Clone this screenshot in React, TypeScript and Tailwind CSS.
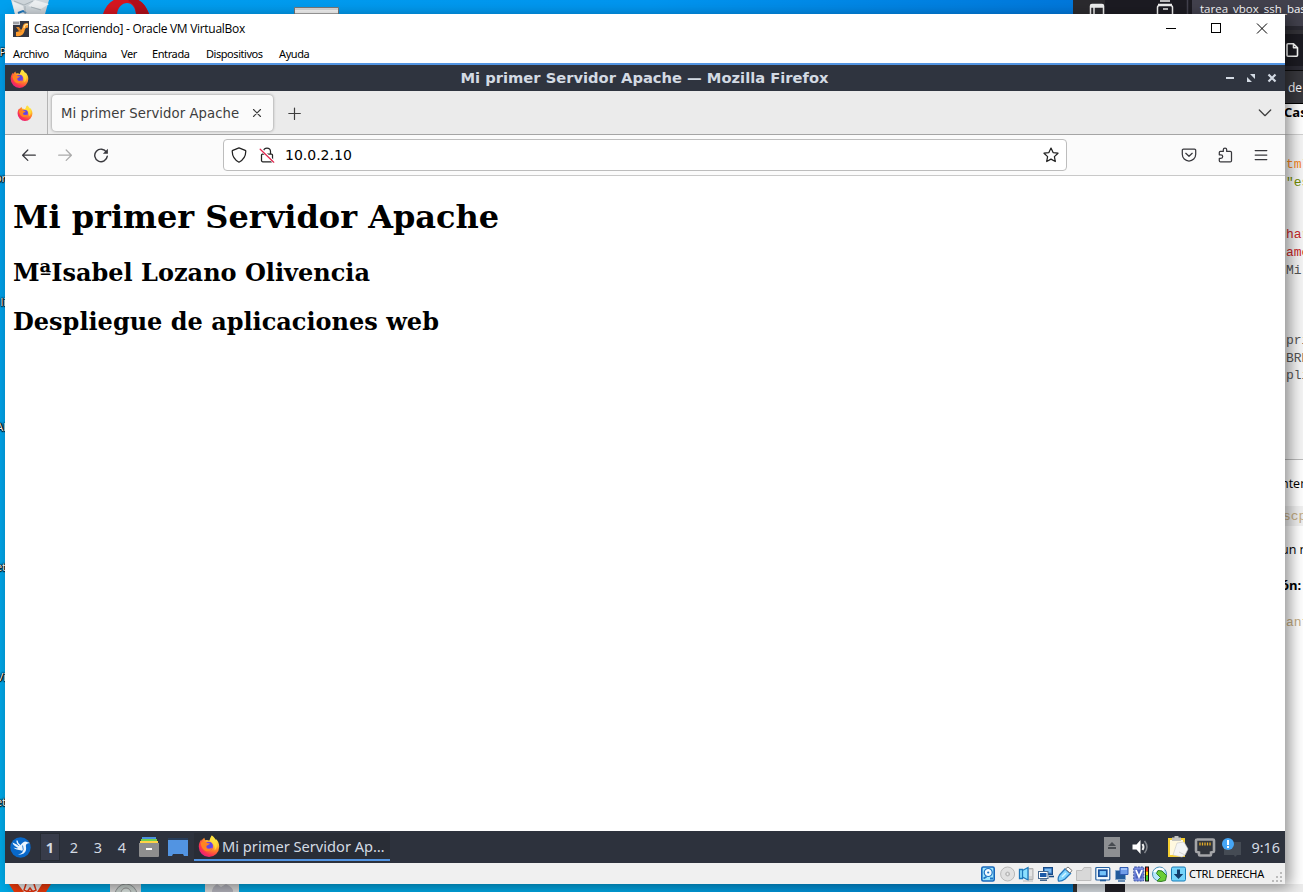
import type { ReactNode } from "react";

const UI = "font-['Open_Sans','Noto_Sans',sans-serif]";
const DEJAVU = "font-['DejaVu_Sans',sans-serif]";

function Icon({ size = 16, className = "", children, box }: { size?: number; className?: string; children: ReactNode; box?: string }) {
  return (
    <svg
      width={size}
      height={size}
      viewBox={box ?? "0 0 16 16"}
      fill="none"
      stroke="currentColor"
      strokeWidth="1.25"
      strokeLinecap="round"
      strokeLinejoin="round"
      className={`block shrink-0 ${className}`}
    >
      {children}
    </svg>
  );
}

function Firefox({ size, id, className = "" }: { size: number; id: string; className?: string }) {
  return (
    <svg width={size} height={size} viewBox="0 0 20 20" className={`block shrink-0 ${className}`}>
      <defs>
        <radialGradient id={id} cx="0.8" cy="0.12" r="0.98">
          <stop offset="0" stopColor="#fff44f" />
          <stop offset="0.38" stopColor="#ffc02a" />
          <stop offset="0.62" stopColor="#ff7a2c" />
          <stop offset="0.85" stopColor="#fb3450" />
          <stop offset="1" stopColor="#e9207c" />
        </radialGradient>
      </defs>
      <path
        d="M12.6.5c2 1.4 2.9 3 3.2 4.2.3-.3.3-.7.2-1.200 2 1.600 3.300 4.200 3.300 7.100a9.300 9.300 0 0 1-18.600 0C.7 7.900 1.600 5.600 3 4c0 .6.100 1 .3 1.300C3.900 4 5 3.100 5.900 2.600c-.1.900.3 1.700.8 2.100 1.500-.3 2.700 0 3.700.6C10.900 3.800 11.600 1.600 12.600.5Z"
        fill={`url(#${id})`}
      />
      <path d="M10.400 5.300C11 3.500 11.800 1.700 12.600.5c3 2 3.600 4.500 4.300 6.500.8 2.500.2 5.500-1.900 7 .8-4-.6-6.900-4.600-8.700Z" fill="#ffe03c" opacity="0.75" />
      <circle cx="9.800" cy="10.100" r="4" fill="#8a3fe0" />
      <circle cx="10.300" cy="9.300" r="2.600" fill="#5b4be0" />
      <path d="M2.400 7.100c2.100-1.300 4-1.100 5.400 0 .9.500 2.100.4 3 .6-.4 1.200-1.900 1.300-2.700 1.900-1 .7-.6 2.600 1 2.900 1.800.3 2.600-.6 4-.4-1 2.600-4.400 3.600-7.100 2C3.800 12.700 2.700 9.800 2.400 7.100Z" fill="#ff8420" />
    </svg>
  );
}

function Desktop() {
  return (
    <div className="absolute inset-0 overflow-hidden bg-gradient-to-b from-[#019be8] to-[#00a9e6]">
      <div className="absolute inset-x-0 top-0 h-[14px] bg-gradient-to-r from-[#00a0ee] via-[#0095ef] to-[#0067d0]" />
      <div className="absolute bottom-0 left-[600px] h-[8px] w-[474px] bg-gradient-to-r from-[#00a9e6] to-[#0080d4]" />
      <svg className="absolute left-0 top-0" width="350" height="14" viewBox="0 0 350 14">
        <path d="M11 0h38l-4 14H15Z" fill="#cfd6db" />
        <path d="m12 1 11 5 2 8H15ZM35 0l-7 6 13 3 8-5Z" fill="#edf0f2" />
        <path d="m18 13 5-2 3 2" stroke="#2179bf" strokeWidth="2" fill="none" />
        <path d="m14 1 10 4 9-4M25 6v8m6-7 10 3" stroke="#aab4ba" fill="none" />
        <path d="M103 14C106 4 114 -3 126-3s20 7 23 17h-13c-1-7-4-11-9-11s-9 4-10 11Z" fill="#d51620" />
        <path d="M132-2c9 1 14 8 17 16h-13c0-7-3-11-8-13Z" fill="#b30f1b" />
        <path d="M294.500 7.500h44V14h-44z" fill="#d7d7d7" stroke="#777" />
        <path d="M295 11.500h43" stroke="#f6f6f6" strokeWidth="3" />
      </svg>
      <svg className="absolute bottom-0 left-0" width="250" height="8" viewBox="0 0 250 8">
        <path d="M9 0h42l-5 8H14Z" fill="#ef3b0c" />
        <path d="M18 0h24l-5 8H24Z" fill="#eee" />
        <path d="m26 0-2 6 3 1.500h6l3-1.500-2-6M27 8l3-4 3 4" stroke="#e73510" strokeWidth="1.500" fill="none" />
        <path d="M110 0h31v8h-31zM205 0h34v8h-34z" fill="#d9d9d9" />
        <circle cx="126" cy="11" r="11" fill="#c9d3cf" stroke="#8e9494" />
        <circle cx="126" cy="9" r="5" fill="#dce5e1" stroke="#999" />
        <path d="M212 8q0-5 5-8l4 3 5-3q8 4 7 8Z" fill="#b3b3bc" />
      </svg>
      {[
        ["P", "top-[45px]"],
        ["or", "top-[171px]"],
        ["li", "top-[295px]"],
        ["Al", "top-[420px]"],
        ["et", "top-[560px]"],
        ["Vi", "top-[670px]"],
        ["et", "top-[795px]"],
      ].map(([t, pos]) => (
        <span key={pos} className={`absolute left-0 w-[6px] h-[14px] overflow-hidden flex justify-end text-[11px] leading-[14px] text-white [text-shadow:0_1px_1px_#000,1px_0_1px_#000,0_0_2px_#000,0_0_2px_#000] ${UI} ${pos}`}>
          {t}
        </span>
      ))}
    </div>
  );
}

function BackgroundBrowser() {
  return (
    <div className={`absolute left-[1073px] top-0 h-[892px] w-[230px] overflow-hidden bg-[#f5f5f5] ${UI}`}>
      <div className="flex h-[26px] bg-[#1c1b22] text-[#fbfbfe]">
        <div className="w-[32px] bg-[#2b2a2e]" />
        <div className="flex-1" />
        <div className="w-[111px] overflow-hidden whitespace-nowrap bg-[#42414d] pl-[8px] pt-[1px] text-[11.500px] leading-[16px]">tarea_vbox_ssh_bastionado</div>
      </div>
      <div className="h-[4px] bg-[#2b2a33]" />
      <div className="h-[4px] bg-[#333238]" />
      <div className="flex h-[32px] justify-end bg-[#1c1b22] pr-[3px] pt-[8px] text-white">
        <Icon size={16}><path d="M4 1.800h5.500l4 4v7.400a1 1 0 0 1-1 1H4a1 1 0 0 1-1-1V2.800a1 1 0 0 1 1-1Zm5.500 0v4h4" strokeWidth="1.600" /></Icon>
      </div>
      <div className="h-[4px] bg-[#2b2a33]" />
      <div className="h-[33px] border-t border-[#0c0c0d] bg-[#38383d] pl-[215px] pt-[9px] text-[12px] leading-[16px] text-[#fbfbfe]">de</div>
      <div className="h-[32px] border-t border-black border-b border-b-[#d0d0d0] bg-white pl-[211px] text-[13px] font-bold leading-[16px] text-black">Cas</div>
      <div className="h-[325px] border-b border-[#bbb] whitespace-pre pl-[213px] pt-[21px] font-['Liberation_Mono',monospace] text-[13px] leading-[17.600px] text-[#555]">
        <div className="text-[#f5871f]">tml</div>
        <div className="text-[#718c00]">"es</div>
        <div>{" "}</div>
        <div>{" "}</div>
        <div className="text-[#c82829]">har</div>
        <div className="text-[#c82829]">ame</div>
        <div>Mi</div>
        <div>{" "}</div>
        <div>{" "}</div>
        <div>{" "}</div>
        <div>pri</div>
        <div>BRE</div>
        <div>pli</div>
      </div>
      <div className="h-[432px] whitespace-nowrap bg-white pl-[208px] pt-[16px] text-[12.500px] leading-[16px] text-black">
        <div>nter</div>
        <div className="mt-[14px] h-[20px] bg-[#f1f1f1] pl-[2px] pt-[3px] font-['Liberation_Mono',monospace] text-[13px] text-[#c4ad84]">scp</div>
        <div className="mt-[16px]">un n</div>
        <div className="mt-[19px] text-[13px] font-bold">ón:</div>
        <div className="mt-[22px] pl-[5px] font-['Liberation_Mono',monospace] text-[13px] text-[#c4ad84]">ant</div>
      </div>
      <svg className="absolute left-0 top-0" width="120" height="14" viewBox="0 0 120 14" fill="none" stroke="#eee" strokeWidth="1.500">
        <path d="M17.500 14V6q0-1.500 1.500-1.500h10q1.500 0 1.500 1.500v8M17.500 7h13M21 7v7" />
        <path d="M18 5.800h12" strokeWidth="2.500" />
        <path d="M87 1h10M85 4.500h14M84.500 14V7.500q0-2 2-2h11q2 0 2 2V14M90 9h5" />
        <path d="M114.500 0v14" stroke="#42414d" />
      </svg>
      <div className="absolute bottom-0 left-0 flex h-[8px] w-[52px]">
        <div className="w-[4px] bg-[#333]" />
        <div className="w-[28px] bg-[#d7dde2]" />
        <div className="w-[20px] bg-[#232229]" />
      </div>
      <div className="absolute bottom-0 left-[52px] h-[8px] w-[178px] bg-[#ececec]" />
    </div>
  );
}

function WindowHeader() {
  return (
    <header className="h-[49px] bg-white text-black">
      <div className="flex h-[29px] items-center pl-[8px]">
        <svg width="16" height="16" viewBox="0 0 16 16" className="block">
          <path d="M0 0h16v16H0z" fill="#343641" />
          <path d="M0 0h7v4H0z" fill="#d0d3da" />
          <path d="M1 1v2m2-2v2m2-2v2" stroke="#555" strokeWidth=".8" />
          <path d="M15 2.500c-4-1-5 1-5.500 4C9 9 6.500 10.500 3 11v4c5 1 7.500-1.500 8.500-5 .6-3 1.500-3 3.500-3.500Z" fill="#ff9c2d" />
          <path d="M15 3.500c-3-.5-3.500 1-4 3.500" stroke="#ffe8a0" strokeWidth="1.200" fill="none" />
          <path d="M3 6h3l3 4.500-2 1Z" fill="#e0872a" />
        </svg>
        <span className={`ml-[5px] text-[12px] tracking-[-0.290px] ${UI}`}>Casa [Corriendo] - Oracle VM VirtualBox</span>
        <svg className="ml-auto mr-[17px] block" width="103" height="12" viewBox="0 0 103 12" fill="none" stroke="#000" shapeRendering="crispEdges">
          <path d="M1 5.500h10M46.500.5h9v9h-9z" />
          <path d="m92 .5 10 10m0-10-10 10" shapeRendering="auto" />
        </svg>
      </div>
      <nav className="flex h-[20px] gap-[16px] pl-[8px] pt-[2px] text-[11px] leading-[18px] tracking-[-0.400px] font-['Noto_Sans',sans-serif]">
        <span className="w-[35px]">Archivo</span>
        <span className="w-[41px]">Máquina</span>
        <span className="w-[15px]">Ver</span>
        <span className="w-[38px]">Entrada</span>
        <span className="w-[57px] tracking-[-0.450px]">Dispositivos</span>
        <span>Ayuda</span>
      </nav>
    </header>
  );
}

function BrowserChrome() {
  return (
    <div className={DEJAVU}>
      <div className="flex h-[28px] items-center border-t-2 border-[#5294e2] bg-[#2f343f] pl-[5px] pr-[8px] text-[#d3dae3]">
        <Firefox size={19} id="fx-title" />
        <div className="flex-1 pl-[35px] text-center text-[14.700px] font-bold leading-[24px]">Mi primer Servidor Apache — Mozilla Firefox</div>
        <svg width="52" height="12" viewBox="0 0 52 12" fill="#d3dae3">
          <path d="M1 5h8v2H1zM25 2h5v5zM22 5v5h5z" />
          <path d="m43.500 2.500 7 7m0-7-7 7" stroke="#d3dae3" strokeWidth="2.200" />
        </svg>
      </div>
      <div className="flex h-[44px] border-b border-[#a5a5a5] bg-[#ebebeb] text-[#3d3d3d]">
        <div className="flex w-[43px] items-center justify-center border-r border-[#b4b4b4] pr-[3px]">
          <Firefox size={16} id="fx-tab" />
        </div>
        <div className="ml-[4px] mt-[4px] flex h-[36px] w-[221px] items-center rounded-[4px] bg-[#fbfbfb] pl-[9px] shadow-[0_0_3px_rgba(0,0,0,0.45)]">
          <span className="whitespace-nowrap font-['DejaVu_Sans_Condensed','DejaVu_Sans',sans-serif] text-[14.700px] tracking-[0.080px] [font-stretch:condensed]">Mi primer Servidor Apache</span>
          <Icon size={16} className="ml-auto mr-[8px]"><path d="m4.500 4.500 7 7m0-7-7 7" strokeWidth="1.100" /></Icon>
        </div>
        <Icon size={16} className="ml-[14px] mt-[15px]"><path d="M7.500 2v11.500M1.800 7.500h11.500" strokeWidth="1.200" /></Icon>
        <Icon size={16} className="ml-auto mr-[12px] mt-[14px]"><path d="m2.300 5 5.700 5.700L13.700 5" /></Icon>
      </div>
      <div className="flex h-[41px] items-center border-b border-[#c9c9c9] bg-[#fbfbfb] pl-[16px] pr-[16px] text-[#38383d]">
        <Icon><path d="M14.300 8.200H1.700M6.800 3 1.600 8.200l5.200 5.200" /></Icon>
        <Icon className="ml-[20px] text-[#aaa]"><path d="M1.700 8.200h12.600M9.200 3l5.200 5.200-5.200 5.200" /></Icon>
        <Icon className="ml-[20px]"><path d="M13.500 5.300A6.300 6.300 0 1 0 14.300 9.200" strokeWidth="1.400" /><path d="M14.900 1.800v5H9.900Z" fill="currentColor" stroke="none" /></Icon>
        <div className="ml-[114px] flex h-[32px] w-[844px] items-center rounded-[4px] border border-[#bdbdbd] bg-white pl-[7px] pr-[7px] text-[#222]">
          <Icon><path d="M8 .9 14.200 3.400c.4.200.6.500.6.900-.1 4.800-2.400 8.700-6.800 10.900C3.600 13 1.300 9.100 1.200 4.300c0-.4.200-.7.600-.9Z" /></Icon>
          <Icon className="ml-[12px]">
            <path d="M4.500 7V4.500a3.500 3.500 0 0 1 7 0V7M3.500 7h9a1 1 0 0 1 1 1v5.500a1.300 1.300 0 0 1-1.300 1.300H3.800a1.300 1.300 0 0 1-1.300-1.300V8a1 1 0 0 1 1-1Z" />
            <path d="m1.500 2 13.500 13" stroke="#fff" strokeWidth="3" />
            <path d="m1.200 2.200 13.500 13" stroke="#e22850" />
          </Icon>
          <span className="ml-[10px] text-[14px] text-black">10.0.2.10</span>
          <Icon className="ml-auto"><path d="m8 1.100 2.100 4.500 4.900.6-3.600 3.400.9 4.900L8 12.100l-4.300 2.400.9-4.900L1 6.200l4.900-.6Z" /></Icon>
        </div>
        <Icon className="ml-[114px]"><path d="M2.500 2.200h11a1.200 1.200 0 0 1 1.200 1.200v3.900a6.700 6.700 0 0 1-13.400 0V3.400a1.200 1.200 0 0 1 1.200-1.200ZM4.800 6.300 8 9.300l3.200-3" /></Icon>
        <Icon className="ml-[20px]"><path d="M2.300 7.800V5.400q0-1 1-1h3V2.800a1.700 1.700 0 0 1 3.400 0v1.600h3.600q1.200 0 1.200 1.200v8.100q0 1.200-1.200 1.200H3.500q-1.200 0-1.200-1.200v-2.300h1.600a1.800 1.800 0 0 0 0-3.600Z" /></Icon>
        <Icon className="ml-[20px]"><path d="M2.200 3.500h11.600M2.200 8h11.600M2.200 12.500h11.600" /></Icon>
      </div>
    </div>
  );
}

function Page() {
  return (
    <main className="h-[655px] bg-white pl-[8px] pt-[22px] font-['DejaVu_Serif',serif] font-bold text-black">
      <h1 className="text-[32px] leading-[38px]">Mi primer Servidor Apache</h1>
      <h2 className="mt-[23px] text-[24px] leading-[28px]">MªIsabel Lozano Olivencia</h2>
      <h2 className="mt-[21px] text-[24px] leading-[28px]">Despliegue de aplicaciones web</h2>
    </main>
  );
}

function GuestTaskbar() {
  return (
    <div className="flex h-[32px] items-center bg-[#2d323d] pr-[5px] font-['Noto_Sans',sans-serif] text-[14.500px] text-[#d3dae3]">
      <svg className="ml-[5px] block" width="21" height="21" viewBox="0 0 21 21">
        <circle cx="10.500" cy="10.500" r="10.200" fill="#0868c9" />
        <path d="M2.500 5.500c2 1 4.500 1.500 6 3.500C10.500 9.500 11 6 15 4.500c2 .5 3 .8 5 1.500-3 .3-4.500 1.200-4 4 .8 5-2.500 8-8 7.500 4-1 5-2.500 3.500-4C8 13 5 12.500 3.500 10.500c2 .8 3.500.8 4.500.4C5 9.500 3 8 2.500 5.500Z" fill="#e9f4ff" />
        <path d="M7 3.500q0 3 3.500 5.500" stroke="#e9f4ff" strokeWidth="1.300" fill="none" />
        <path d="M12.500 8.500q2 4-1 7.500" stroke="#0868c9" strokeWidth=".8" fill="none" />
      </svg>
      <div className="ml-[9px] flex h-[28px] w-[20px] items-center justify-center border border-[#262b33] bg-[#383c4a] pt-[2px] font-bold">1</div>
      <span className="ml-[2px] w-[24px] pt-[2px] text-center">2</span>
      <span className="w-[24px] pt-[2px] text-center">3</span>
      <span className="w-[24px] pt-[2px] text-center">4</span>
      <svg className="ml-[5px] block" width="20" height="20" viewBox="0 0 20 20">
        <path d="M3 0h14v2H3z" fill="#4b91dd" /><path d="M2 2h16v2H2z" fill="#71cf4d" /><path d="M1 4h18v2H1z" fill="#ffd246" />
        <path d="M0 6h20v13q0 1-1 1H1q-1 0-1-1Z" fill="#8e8e8e" /><path d="M7 11h6v2H7z" fill="#fff" />
      </svg>
      <svg className="ml-[9px] block" width="20" height="18" viewBox="0 0 20 18">
        <path d="M0 0h20v2H0z" fill="#263d5c" /><path d="M0 2h20v16h-4l-1-2H5l-1 2H0Z" fill="#5294e2" />
      </svg>
      <div className="ml-[6px] flex h-[28px] w-[196px] items-center border-b-2 border-[#5294e2] bg-[#292d36] pl-[4px] whitespace-nowrap">
        <Firefox size={22} id="fx-task" />
        <span className="ml-[2px] pt-[1px] text-[14.650px]">Mi primer Servidor Ap…</span>
      </div>
      <svg className="ml-auto block" width="140" height="24" viewBox="0 0 140 24">
        <path d="M0 2h16v20H0z" fill="#8d8f92" /><path d="m4 11 4-4 4 4Zm0 1h8v2H4z" fill="#474b50" />
        <path d="M28.500 9.500h4l4-4.500v14l-4-4.500h-4Z" fill="#fff" /><path d="M38.500 9q2 3 0 6" stroke="#eee" strokeWidth="2" fill="none" /><path d="M40.500 6q5 6 0 12" stroke="#83878e" strokeWidth="1.500" fill="none" />
        <path d="M64 3h17v19H64z" fill="#f5ce30" /><path d="M66 5h13v15H66z" fill="#fff8df" /><path d="M68 2.500h2.500V1h4v1.500H77V6h-9z" fill="#c4c4c0" />
        <path d="m73 8 7-1 4 7-3 6-3 2-9-2Z" fill="#f4f4f4" stroke="#c8c8c8" strokeWidth=".6" /><path d="m75 17 6 3" stroke="#d5d5d5" />
        <path d="M93 4.500h16.500q1 0 1 1V16q0 1-1 1l-2 .5v2q0 1-1 1h-10q-1 0-1-1v-2l-2-.5q-1 0-1-1V5.500q0-1 1-1Z" transform="translate(-.5 0)" stroke="#a4a5a8" strokeWidth="2.600" fill="#30343b" /><path d="M96 7.500v3m2.500-3v3m2.500-3v3m2.500-3v3m2.500-3v3" stroke="#e5ac28" strokeWidth="1.300" />
        <path d="M120 7h17v13h-4l-2 2-1-2h-10Z" fill="#454b54" /><circle cx="124" cy="9" r="6" fill="#46a6f5" /><path d="M123 5h2v5h-2zm0 6h2v2h-2z" fill="#fff" />
      </svg>
      <span className="ml-[7px] pt-px font-['Noto_Sans',sans-serif] text-[14.400px]">9:16</span>
    </div>
  );
}

function StatusIcons() {
  return (
    <svg width="206" height="16" viewBox="0 0 206 16" className="block">
      <rect x="1.800" y="1" width="12.400" height="14" rx="1.500" fill="#9fe8ff" stroke="#1667bb" strokeWidth="1.600" />
      <circle cx="8.200" cy="6.500" r="4" fill="#f3fbff" stroke="#1f74c4" strokeWidth="1.200" /><circle cx="8.200" cy="6.500" r="1.100" fill="#1f74c4" />
      <path d="m3.500 12.500 3-1.800M10 12.500h3" stroke="#1f74c4" strokeWidth="1.800" />
      <g stroke="#b9b9b9" fill="#e1e1e1"><circle cx="27.600" cy="8" r="7" /><circle cx="27.600" cy="8" r="2" fill="#c5c5c5" /><circle cx="27.600" cy="8" r=".8" fill="#fff" stroke="none" /></g>
      <path d="M48 2.500h5v11h-5z" fill="#d0d0d0" stroke="#b0b0b0" /><path d="M49 5h3m-3 2h3m-3 2h3" stroke="#f8f8f8" />
      <path d="M39.500 3.500h3v9h-3zM42.500 4.500l5.500-3v12.500l-5.500-3" fill="#8be0ff" stroke="#1d78bb" strokeWidth="1.300" /><path d="M43 15h10" stroke="#b8b8b8" />
      <rect x="63.500" y="1.500" width="9" height="7" fill="#2f6eb8" stroke="#174a86" /><rect x="64.700" y="2.700" width="6.600" height="4" fill="#7dbdf2" />
      <path d="M69 10.500h5" stroke="#174a86" strokeWidth="1.600" />
      <rect x="58.500" y="5.500" width="9.500" height="7" fill="#fff" stroke="#47688e" /><rect x="60" y="7" width="6.500" height="4" fill="#1c5aa8" /><path d="M60 14.200h7" stroke="#47688e" strokeWidth="1.600" />
      <path d="m79.500 9 5.500-6 5.500 4.500-5.500 5.500q-3.500 2.500-6.500 2-1-3 1-6Z" fill="#7fd4ff" stroke="#2678bd" strokeWidth="1.300" /><path d="m85.500 3 2.500-2 4 3.500-2 2.500Z" fill="#fff" stroke="#777" /><path d="m82 11 4-4" stroke="#d9f5ff" strokeWidth="1.500" />
      <path d="M96.500 4.500h5.500l2-3h7v13h-14.500Z" fill="#d8d8d8" stroke="#bdbdbd" />
      <rect x="115.800" y="1.500" width="14" height="12.500" rx="1" fill="#f4fbff" stroke="#245f9f" strokeWidth="1.200" /><rect x="118.800" y="4.200" width="8" height="6" fill="#74c3fa" stroke="#164f9b" strokeWidth="1.700" /><path d="M120 14.500h6" stroke="#245f9f" strokeWidth="1.600" />
      <path d="M135.500 4.500h10v9h-10z" fill="#225b9a" stroke="#87aacd" /><path d="M138 15h7" stroke="#225b9a" strokeWidth="1.300" /><path d="M140 1.500h8v7h-8z" fill="#709de8" stroke="#315bb0" /><path d="M141 3h6" stroke="#b5d0ff" strokeWidth="1.500" />
      <rect x="153.800" y="1" width="10" height="14" rx="1" fill="#7d8fe3" stroke="#2d4798" strokeDasharray="2 1" /><path d="M155.500 3.500h7v9h-7z" fill="#4a61bd" /><path d="m156 4 3 7 3-7" stroke="#fff" strokeWidth="1.800" fill="none" />
      <path d="M165 .5h4v15h-4z" fill="#111" /><path d="M166 1.500h2v4h-2z" fill="#f33a18" /><path d="M166 5.500h2v4h-2z" fill="#fd0" /><path d="M166 9.500h2v5h-2z" fill="#3dd62a" />
      <circle cx="179.500" cy="8" r="7" fill="#b7e8fb" stroke="#4c8fb8" /><path d="M174 6q4-5 10-2" stroke="#fff" strokeWidth="2" fill="none" />
      <path d="m178 4.500 4 .5 4.500 4.500-1 5-4.500 1-4-.5 3.500-3.500-4-4Z" fill="#6bce36" stroke="#347e25" />
      <rect x="191.500" y="1" width="14" height="14" rx="1.500" fill="#76d5fb" stroke="#167db8" /><path d="M197 3.500h3V8h3.200l-4.700 5-4.700-5h3.200Z" fill="#123d6c" />
    </svg>
  );
}

export default function App() {
  return (
    <div className="relative h-[892px] w-[1303px] overflow-hidden">
      <Desktop />
      <BackgroundBrowser />
      <div className="absolute left-[5px] top-[14px] h-[870px] w-[1280px] bg-white shadow-[5px_3px_14px_rgba(0,0,0,0.42)]">
        <WindowHeader />
        <BrowserChrome />
        <Page />
        <GuestTaskbar />
        <footer className="flex h-[21px] items-center bg-[#f0f0f0] pl-[975px] text-black">
          <StatusIcons />
          <span className="ml-[3px] whitespace-nowrap pt-px text-[11px] tracking-[-0.230px] font-['Noto_Sans',sans-serif]">CTRL DERECHA</span>
          <svg className="ml-auto mr-[2px] mt-[7px] block" width="11" height="11" fill="#bbb">
            <path d="M8 0h2v2H8zM4 4h2v2H4zm4 0h2v2H8zM0 8h2v2H0zm4 0h2v2H4zm4 0h2v2H8z" />
          </svg>
        </footer>
      </div>
    </div>
  );
}
